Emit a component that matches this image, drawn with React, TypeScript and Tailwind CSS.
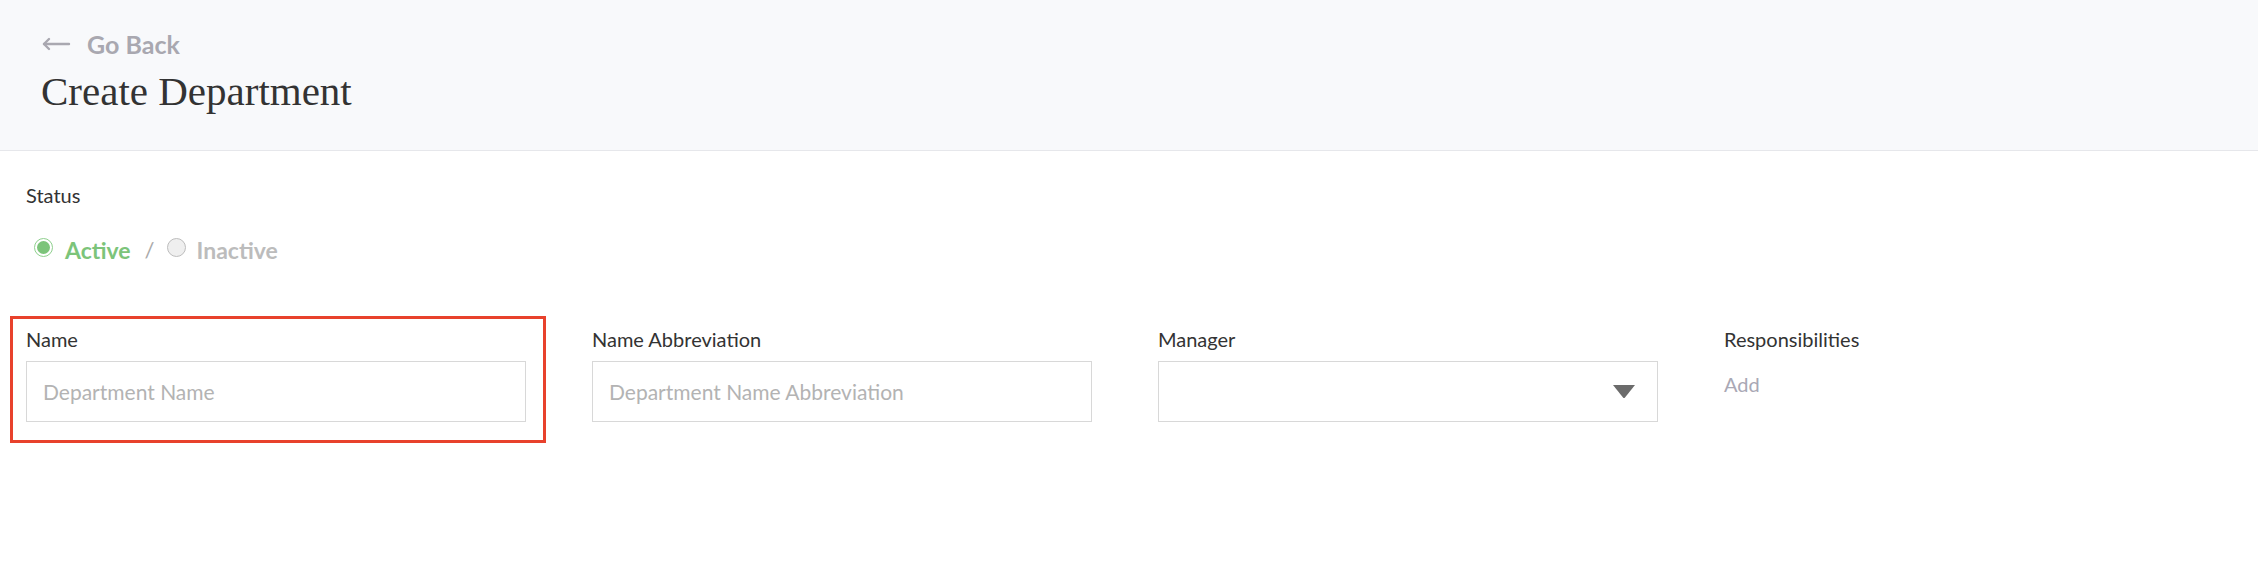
import React from "react";

const sans = { fontFamily: "Lato, 'Noto Sans', sans-serif" };

function Field({ label, children, className = "" }: { label: string; children: React.ReactNode; className?: string }) {
  return (
    <div className={`relative flex flex-col ${className}`}>
      <label className="text-[20px] leading-[24px] text-[#333333]">{label}</label>
      {children}
    </div>
  );
}

export default function App() {
  return (
    <div className="min-h-[568px] bg-white" style={sans}>
      <header className="h-[151px] bg-[#f8f9fb] border-b border-[#e6e7eb] px-[41px] pt-[29px]">
        <button className="flex items-center gap-[16px] text-[#a9a8b0]">
          <svg width="30" height="14" viewBox="0 0 30 14" fill="none" stroke="#a9a8b0" strokeWidth="2.4" strokeLinecap="round" strokeLinejoin="round">
            <path d="M28 7H3" />
            <path d="M8 2L3 7l5 5" />
          </svg>
          <span className="text-[25px] leading-[30px] font-bold">Go Back</span>
        </button>
        <h1
          className="mt-[8px] text-[41px] leading-[48px] text-[#333333]"
          style={{ fontFamily: "'Liberation Serif', 'DejaVu Serif', serif" }}
        >
          Create Department
        </h1>
      </header>

      <main className="px-[26px] pt-[32px]">
        <div className="text-[20px] leading-[24px] text-[#333333]">Status</div>

        <div className="mt-[29px] flex items-center pl-[8px]">
          <span className="mt-[-6px] flex h-[19px] w-[19px] items-center justify-center rounded-full border border-[#8fd08e] bg-white">
            <span className="h-[13px] w-[13px] rounded-full bg-[#7cc47a]" />
          </span>
          <span className="ml-[12px] text-[23px] leading-[28px] font-bold text-[#7cc47a]">Active</span>
          <span className="ml-[14px] text-[22px] leading-[28px] text-[#aaaaaa]">/</span>
          <span className="ml-[12px] mt-[-6px] h-[19px] w-[19px] rounded-full border border-[#bdbdbd] bg-[#efefef]" />
          <span className="ml-[11px] text-[23px] leading-[28px] font-bold text-[#bcbcbc]">Inactive</span>
        </div>

        <div className="mt-[63px] flex gap-[66px]">
          <Field label="Name" className="w-[500px]">
            <div className="mt-[10px] flex h-[61px] items-center border border-[#d8d8d8] px-[16px] text-[21px] text-[#b3b3b3]">
              Department Name
            </div>
            <div className="pointer-events-none absolute top-[-11px] left-[-16px] right-[-20px] bottom-[-21px] border-[3px] border-[#e8412c]" />
          </Field>
          <Field label="Name Abbreviation" className="w-[500px]">
            <div className="mt-[10px] flex h-[61px] items-center border border-[#d8d8d8] px-[16px] text-[21px] text-[#b3b3b3]">
              Department Name Abbreviation
            </div>
          </Field>
          <Field label="Manager" className="w-[500px]">
            <div className="mt-[10px] flex h-[61px] items-center justify-end border border-[#d8d8d8] pr-[22px]">
              <svg width="22" height="13" viewBox="0 0 22 13">
                <path d="M0 0h22l-10 12.4a1.3 1.3 0 0 1-2 0z" fill="#6b6b6b" />
              </svg>
            </div>
          </Field>
          <Field label="Responsibilities" className="flex-1">
            <span className="mt-[21px] text-[20px] leading-[24px] text-[#a9a8b5]">Add</span>
          </Field>
        </div>
      </main>
    </div>
  );
}
